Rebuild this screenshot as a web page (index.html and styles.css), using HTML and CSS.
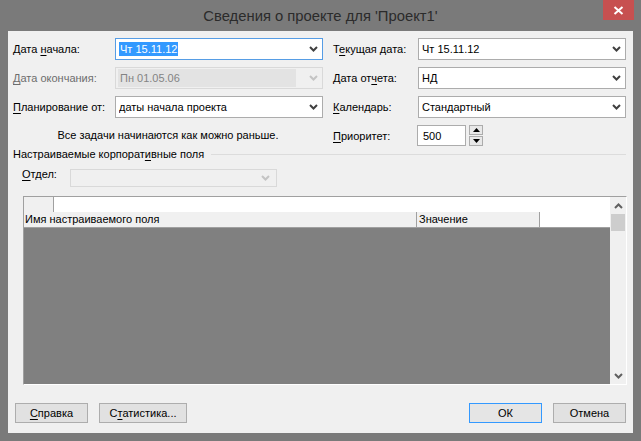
FILE: index.html
```html
<!DOCTYPE html>
<html lang="ru">
<head>
<meta charset="utf-8">
<title>Сведения о проекте</title>
<link rel="stylesheet" href="styles.css">
</head>
<body>
<div class="window">
  <div class="titlebar">
    <div></div>
    <div class="title">Сведения о проекте для 'Проект1'</div>
    <div class="tb-right">
      <div class="close"><svg width="11" height="9" viewBox="0 0 11 9"><path d="M1.5 1 L9.5 8 M9.5 1 L1.5 8" stroke="#fff" stroke-width="2" fill="none"/></svg></div>
    </div>
  </div>
  <div class="client">
    <div class="form">
      <div class="lbl">Дата <u>н</u>ачала:</div>
      <div class="combo focus"><span class="val"><span class="sel">Чт 15.11.12</span></span><svg class="chev" width="9" height="6" viewBox="0 0 9 6"><path d="M1 1 L4.5 4.5 L8 1" stroke="#404040" stroke-width="2" fill="none"/></svg></div>
      <div class="lbl rl">Т<u>е</u>кущая дата:</div>
      <div class="combo"><span class="val">Чт 15.11.12</span><svg class="chev" width="9" height="6" viewBox="0 0 9 6"><path d="M1 1 L4.5 4.5 L8 1" stroke="#404040" stroke-width="2" fill="none"/></svg></div>

      <div class="lbl dis"><u>Д</u>ата окончания:</div>
      <div class="combo disabled"><span class="val"><span class="dbox">Пн 01.05.06</span></span><svg class="chev" width="9" height="6" viewBox="0 0 9 6"><path d="M1 1 L4.5 4.5 L8 1" stroke="#c4c4c4" stroke-width="2" fill="none"/></svg></div>
      <div class="lbl rl">Дата от<u>ч</u>ета:</div>
      <div class="combo"><span class="val">НД</span><svg class="chev" width="9" height="6" viewBox="0 0 9 6"><path d="M1 1 L4.5 4.5 L8 1" stroke="#404040" stroke-width="2" fill="none"/></svg></div>

      <div class="lbl"><u>П</u>ланирование от:</div>
      <div class="combo"><span class="val">даты начала проекта</span><svg class="chev" width="9" height="6" viewBox="0 0 9 6"><path d="M1 1 L4.5 4.5 L8 1" stroke="#404040" stroke-width="2" fill="none"/></svg></div>
      <div class="lbl rl"><u>К</u>алендарь:</div>
      <div class="combo"><span class="val">Стандартный</span><svg class="chev" width="9" height="6" viewBox="0 0 9 6"><path d="M1 1 L4.5 4.5 L8 1" stroke="#404040" stroke-width="2" fill="none"/></svg></div>

      <div class="note">Все задачи начинаются как можно раньше.</div>
      <div class="lbl rl"><u>П</u>риоритет:</div>
      <div class="spin">
        <div class="spin-input">500</div>
        <div class="spin-btns">
          <div class="sb"><svg width="7" height="4" viewBox="0 0 7 4"><path d="M0 4 L3.5 0 L7 4 Z" fill="#000"/></svg></div>
          <div class="sb"><svg width="7" height="4" viewBox="0 0 7 4"><path d="M0 0 L3.5 4 L7 0 Z" fill="#000"/></svg></div>
        </div>
      </div>
    </div>

    <div class="group-head"><span>Настраиваемые корпорат<u>и</u>вные поля</span><div class="line"></div></div>

    <div class="dept-row">
      <div class="lbl"><u>О</u>тдел:</div>
      <div class="combo disabled small"><span class="val"></span><svg class="chev" width="9" height="6" viewBox="0 0 9 6"><path d="M1 1 L4.5 4.5 L8 1" stroke="#c4c4c4" stroke-width="2" fill="none"/></svg></div>
    </div>

    <div class="grid">
      <div class="grid-main">
        <div class="row-a">
          <div class="corner"></div>
          <div class="edit"></div>
        </div>
        <div class="row-b">
          <div class="hcell c1">Имя настраиваемого поля</div>
          <div class="hcell c2">Значение</div>
          <div class="hrest"></div>
        </div>
        <div class="gbody"></div>
      </div>
      <div class="vscroll">
        <div class="sarrow"><svg width="9" height="6" viewBox="0 0 9 6"><path d="M1 5 L4.5 1.5 L8 5" stroke="#606060" stroke-width="2" fill="none"/></svg></div>
        <div class="thumb"></div>
        <div class="track"></div>
        <div class="sarrow"><svg width="9" height="6" viewBox="0 0 9 6"><path d="M1 1 L4.5 4.5 L8 1" stroke="#606060" stroke-width="2" fill="none"/></svg></div>
      </div>
    </div>

    <div class="buttons">
      <div class="btn b1"><u>С</u>правка</div>
      <div class="btn b2">С<u>т</u>атистика...</div>
      <div class="spacer"></div>
      <div class="btn ok">ОК</div>
      <div class="btn b4">Отмена</div>
    </div>
  </div>
</div>
</body>
</html>
```
FILE: styles.css
```css
* { box-sizing: border-box; }
html, body { margin: 0; padding: 0; }
body {
  width: 641px;
  height: 441px;
  overflow: hidden;
  font-family: "Liberation Sans", Arial, sans-serif;
  font-size: 11px;
  color: #000;
}
u { text-decoration: underline; text-underline-offset: 2px; }

.window {
  width: 641px;
  height: 441px;
  background: #7a7a7a;
  display: flex;
  flex-direction: column;
}
.titlebar {
  height: 31px;
  display: grid;
  grid-template-columns: 1fr auto 1fr;
  align-items: start;
}
.title {
  font-size: 14.8px;
  color: #2b2b2b;
  padding-top: 7px;
  line-height: 18px;
}
.tb-right { display: flex; justify-content: flex-end; padding-right: 7px; }
.close {
  width: 31px;
  height: 20px;
  background: #c75050;
  display: flex;
  align-items: center;
  justify-content: center;
}

.client {
  margin: 0 8px;
  height: 402px;
  background: #f0f0f0;
  padding: 7px 7px 9px 5px;
  display: flex;
  flex-direction: column;
}

.form {
  display: grid;
  grid-template-columns: 102px 208px 95px 208px;
  grid-template-rows: 22px 22px 22px 21px;
  row-gap: 7px;
  align-items: center;
}
.lbl { line-height: 16px; white-space: nowrap; }
.lbl.rl { padding-left: 10px; }
.lbl.dis { color: #6d6d6d; }

.combo {
  height: 22px;
  background: #fff;
  border: 1px solid #acacac;
  display: flex;
  align-items: center;
  padding: 0 4px 0 3px;
}
.combo .val { flex: 1; white-space: nowrap; overflow: hidden; line-height: 16px; }
.combo.focus { border-color: #569de5; }
.sel { background: #3399ff; color: #fff; padding: 1px 1px; }
.combo.disabled {
  background: #f0f0f0;
  border-color: #d9d9d9;
  padding: 0 4px 0 2px;
}
.dbox {
  display: block;
  background: #e3e3e3;
  color: #838383;
  padding: 1px 2px;
  margin-right: 7px;
  line-height: 16px;
}
.chev { flex: none; margin-left: 6px; }

.note {
  grid-column: 1 / 3;
  text-align: center;
  line-height: 16px;
  margin-top: -2px;
}

.spin { display: flex; align-items: stretch; height: 21px; margin-left: -1px; }
.spin-input {
  width: 49px;
  background: #fff;
  border: 1px solid #acacac;
  padding: 2px 0 0 5px;
  line-height: 16px;
}
.spin-btns { display: flex; flex-direction: column; justify-content: space-between; margin-left: 3px; width: 14px; }
.sb {
  height: 10px;
  background: #e8e8e8;
  border: 1px solid #acacac;
  display: flex;
  align-items: center;
  justify-content: center;
}

.group-head {
  margin-top: 1px;
  height: 14px;
  display: flex;
  align-items: center;
  line-height: 14px;
}
.group-head span { white-space: nowrap; }
.group-head .line { flex: 1; height: 1px; background: #dcdcdc; margin-left: 7px; margin-right: 0; }

.dept-row {
  margin-top: 8px;
  display: flex;
  align-items: flex-start;
  padding-left: 9px;
}
.dept-row .lbl { width: 48px; line-height: 14px; margin-top: -2px; }
.combo.small { width: 207px; height: 18px; padding-right: 6px; }

.grid {
  margin-top: 9px;
  margin-left: 10px;
  width: 604px;
  height: 189px;
  border-top: 1px solid #a0a0a0;
  border-left: 1px solid #a0a0a0;
  border-right: 1px solid #fff;
  border-bottom: 1px solid #fff;
  display: flex;
}
.grid-main { flex: 1; display: flex; flex-direction: column; }
.row-a { height: 15px; display: flex; }
.corner { width: 30px; background: #f0f0f0; border-right: 1px solid #a0a0a0; }
.edit { flex: 1; background: #fff; }
.row-b { height: 16px; display: flex; border-bottom: 1px solid #a0a0a0; }
.hcell {
  background: #f0f0f0;
  border-right: 1px solid #a0a0a0;
  line-height: 15px;
  white-space: nowrap;
  overflow: hidden;
}
.hcell.c1 { width: 393px; padding-left: 1px; }
.hcell.c2 { width: 123px; padding-left: 2px; }
.hrest { flex: 1; background: #fff; }
.gbody { flex: 1; background: #808080; }

.vscroll {
  width: 16px;
  background: #f0f0f0;
  display: flex;
  flex-direction: column;
}
.sarrow { height: 17px; display: flex; align-items: center; justify-content: center; }
.thumb { height: 17px; background: #cdcdcd; margin: 0 1px; }
.track { flex: 1; }

.buttons {
  margin-top: 18px;
  display: flex;
  height: 20px;
  padding-left: 2px;
}
.btn {
  height: 20px;
  background: #e1e1e1;
  border: 1px solid #adadad;
  display: flex;
  align-items: center;
  justify-content: center;
  line-height: 16px;
}
.b1 { width: 73px; }
.b2 { width: 88px; margin-left: 11px; }
.spacer { flex: 1; }
.ok { width: 73px; border-color: #3399ff; background: #e5e5e5; }
.b4 { width: 73px; margin-left: 11px; }
```
